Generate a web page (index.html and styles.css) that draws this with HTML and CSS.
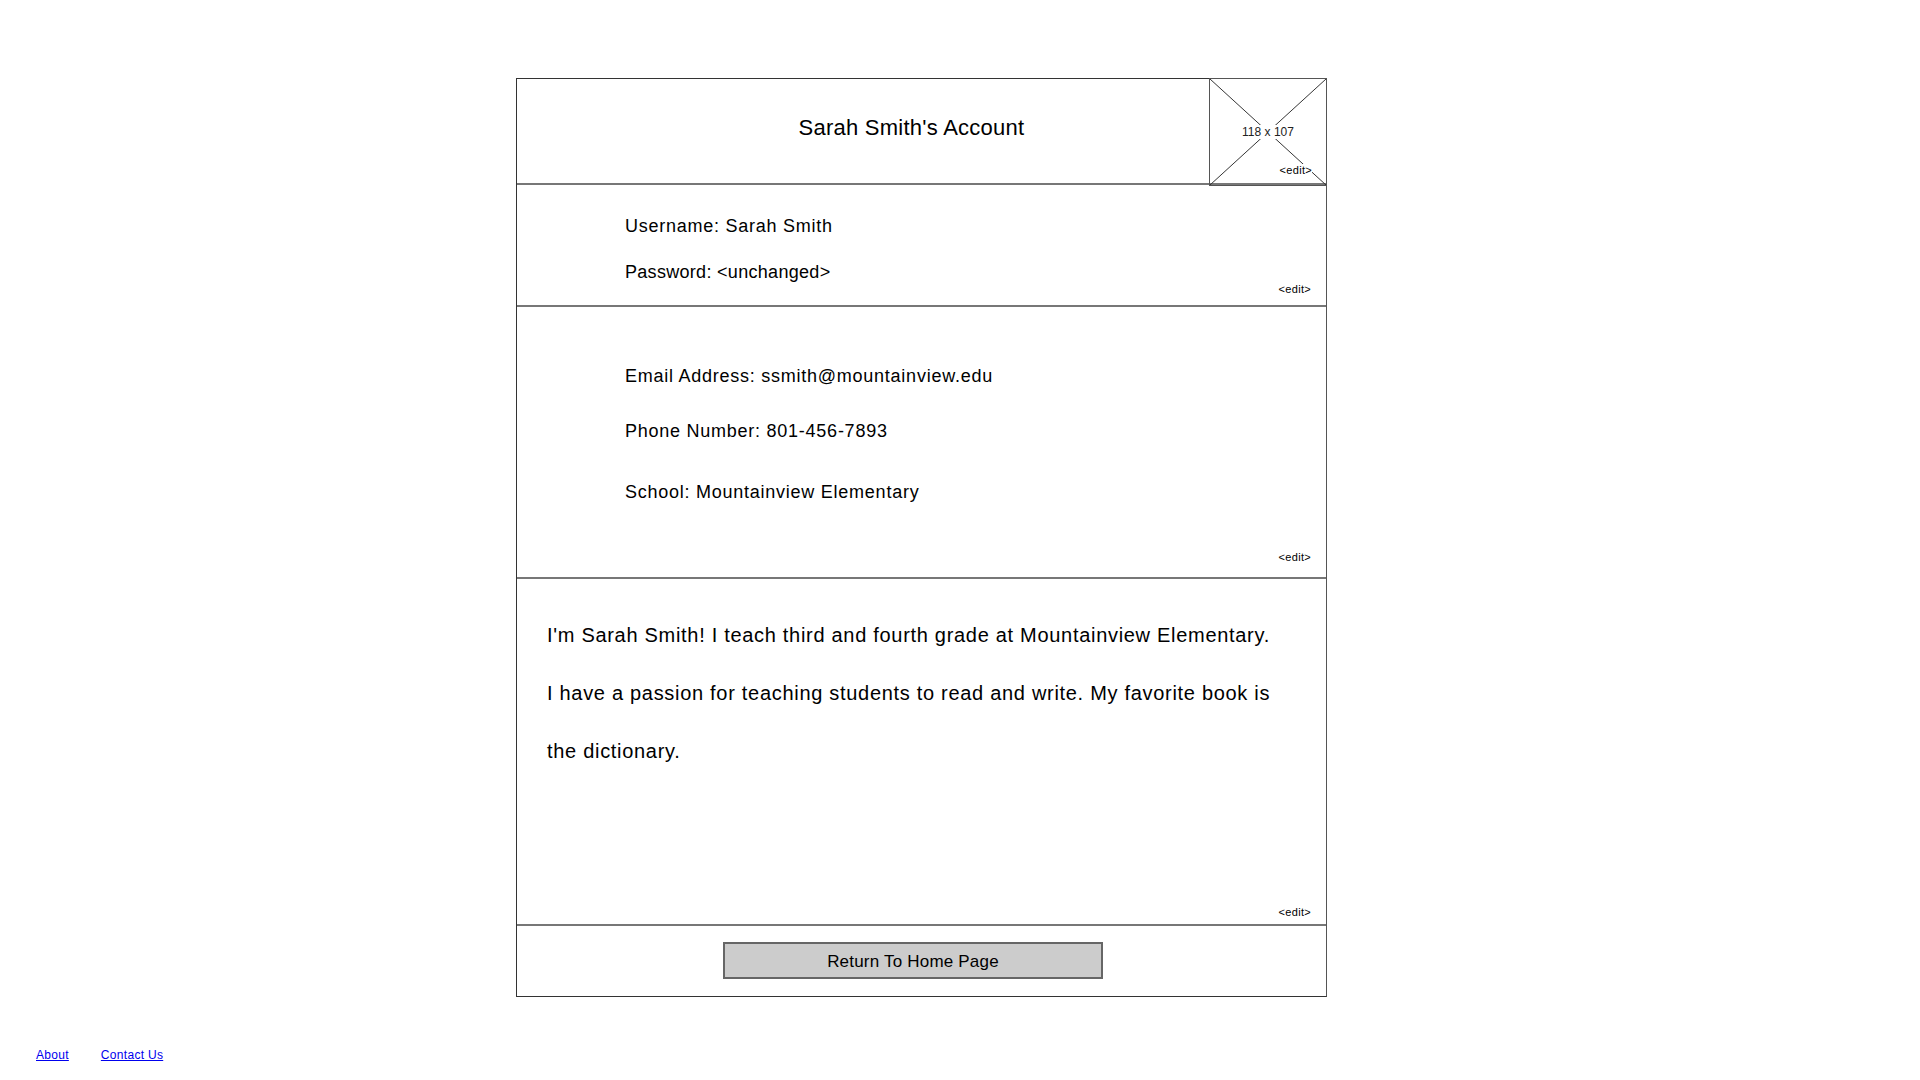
FILE: index.html
```html
<!DOCTYPE html>
<html lang="en">
<head>
<meta charset="utf-8">
<title>Sarah Smith's Account</title>
<link rel="stylesheet" href="styles.css">
</head>
<body>
<div class="page">
  <div class="card">
    <div class="header">
      <div class="title">Sarah Smith's Account</div>
      <div class="avatar">
        <svg class="avatar-x" viewBox="0 0 117 107" preserveAspectRatio="none">
          <line x1="0" y1="0" x2="117" y2="107" stroke="#333" stroke-width="1"/>
          <line x1="117" y1="0" x2="0" y2="107" stroke="#333" stroke-width="1"/>
        </svg>
        <span class="avatar-size">118 x 107</span>
        <span class="avatar-edit">&lt;edit&gt;</span>
      </div>
    </div>
    <div class="section sec-login">
      <div class="field field-user">Username: Sarah Smith</div>
      <div class="field field-pass">Password: &lt;unchanged&gt;</div>
      <div class="edit">&lt;edit&gt;</div>
    </div>
    <div class="section sec-contact">
      <div class="field field-email">Email Address: ssmith@mountainview.edu</div>
      <div class="field field-phone">Phone Number: 801-456-7893</div>
      <div class="field field-school">School: Mountainview Elementary</div>
      <div class="edit">&lt;edit&gt;</div>
    </div>
    <div class="section sec-bio">
      <p class="bio">I'm Sarah Smith! I teach third and fourth grade at Mountainview Elementary.<br>I have a passion for teaching students to read and write. My favorite book is<br>the dictionary.</p>
      <div class="edit">&lt;edit&gt;</div>
    </div>
    <div class="footer-row">
      <button class="home-btn" type="button">Return To Home Page</button>
    </div>
  </div>
  <nav class="links">
    <a href="#" class="link">About</a>
    <a href="#" class="link">Contact Us</a>
  </nav>
</div>
</body>
</html>
```
FILE: styles.css
```css
* { box-sizing: border-box; }
html, body { margin: 0; padding: 0; background: #fff; }
body {
  font-family: "Liberation Sans", Arial, sans-serif;
  color: #000;
}
.page {
  padding: 78px 0 0 516px;
}
.card {
  width: 811px;
  border: 1px solid #333;
  border-right-color: #555;
  background: #fff;
}
.header {
  height: 106px;
  display: flex;
  align-items: flex-start;
  border-bottom: 2px solid #777;
}
.title {
  flex: 1;
  text-align: center;
  padding-left: 97px;
  padding-top: 36px;
  font-size: 22px;
  line-height: 26px;
  letter-spacing: 0.25px;
}
.avatar {
  position: relative;
  width: 118px;
  height: 108px;
  margin: -1px -1px -2px 0;
  border: 1px solid #555;
  display: flex;
  align-items: center;
  justify-content: center;
}
.avatar-x {
  position: absolute;
  inset: 0;
  width: 100%;
  height: 100%;
}
.avatar-size {
  position: relative;
  font-size: 12px;
  line-height: 14px;
  background: #fff;
  color: #222;
  padding: 0 1px;
}
.avatar-edit {
  position: absolute;
  right: 14px;
  bottom: 8px;
  font-size: 11px;
  line-height: 13px;
  letter-spacing: 0.3px;
  background: #fff;
}
.section {
  display: flex;
  flex-direction: column;
  border-bottom: 2px solid #777;
  padding-left: 108px;
  padding-right: 15px;
}
.field {
  font-size: 18px;
  line-height: 22px;
  letter-spacing: 0.75px;
}
.field-pass { margin-top: 24px; letter-spacing: 0.3px; }
.edit {
  margin-top: auto;
  align-self: flex-end;
  font-size: 11px;
  line-height: 13px;
  letter-spacing: 0.3px;
}
.sec-login {
  height: 122px;
  padding-top: 30px;
  padding-bottom: 10px;
}
.sec-contact {
  height: 272px;
  padding-top: 58px;
  padding-bottom: 13px;
}
.field-phone { margin-top: 33px; }
.field-school { margin-top: 39px; }
.sec-bio {
  height: 347px;
  padding-left: 30px;
  padding-top: 27px;
  padding-bottom: 5px;
}
.bio {
  margin: 0;
  font-size: 20px;
  line-height: 58px;
  letter-spacing: 0.7px;
  white-space: nowrap;
}
.footer-row {
  height: 70px;
  padding: 16px 0 0 206px;
}
.home-btn {
  width: 380px;
  height: 37px;
  background: #cccccc;
  border: 2px solid #666;
  border-radius: 0;
  font-family: "Liberation Sans", Arial, sans-serif;
  font-size: 17px;
  letter-spacing: 0.2px;
  color: #000;
  padding: 2px 0 0;
}
.links {
  margin-top: 51px;
  margin-left: -480px;
  display: flex;
  gap: 32px;
}
.link {
  font-size: 12px;
  line-height: 14px;
  letter-spacing: 0.3px;
  color: #0000ee;
  text-decoration: underline;
}
```
